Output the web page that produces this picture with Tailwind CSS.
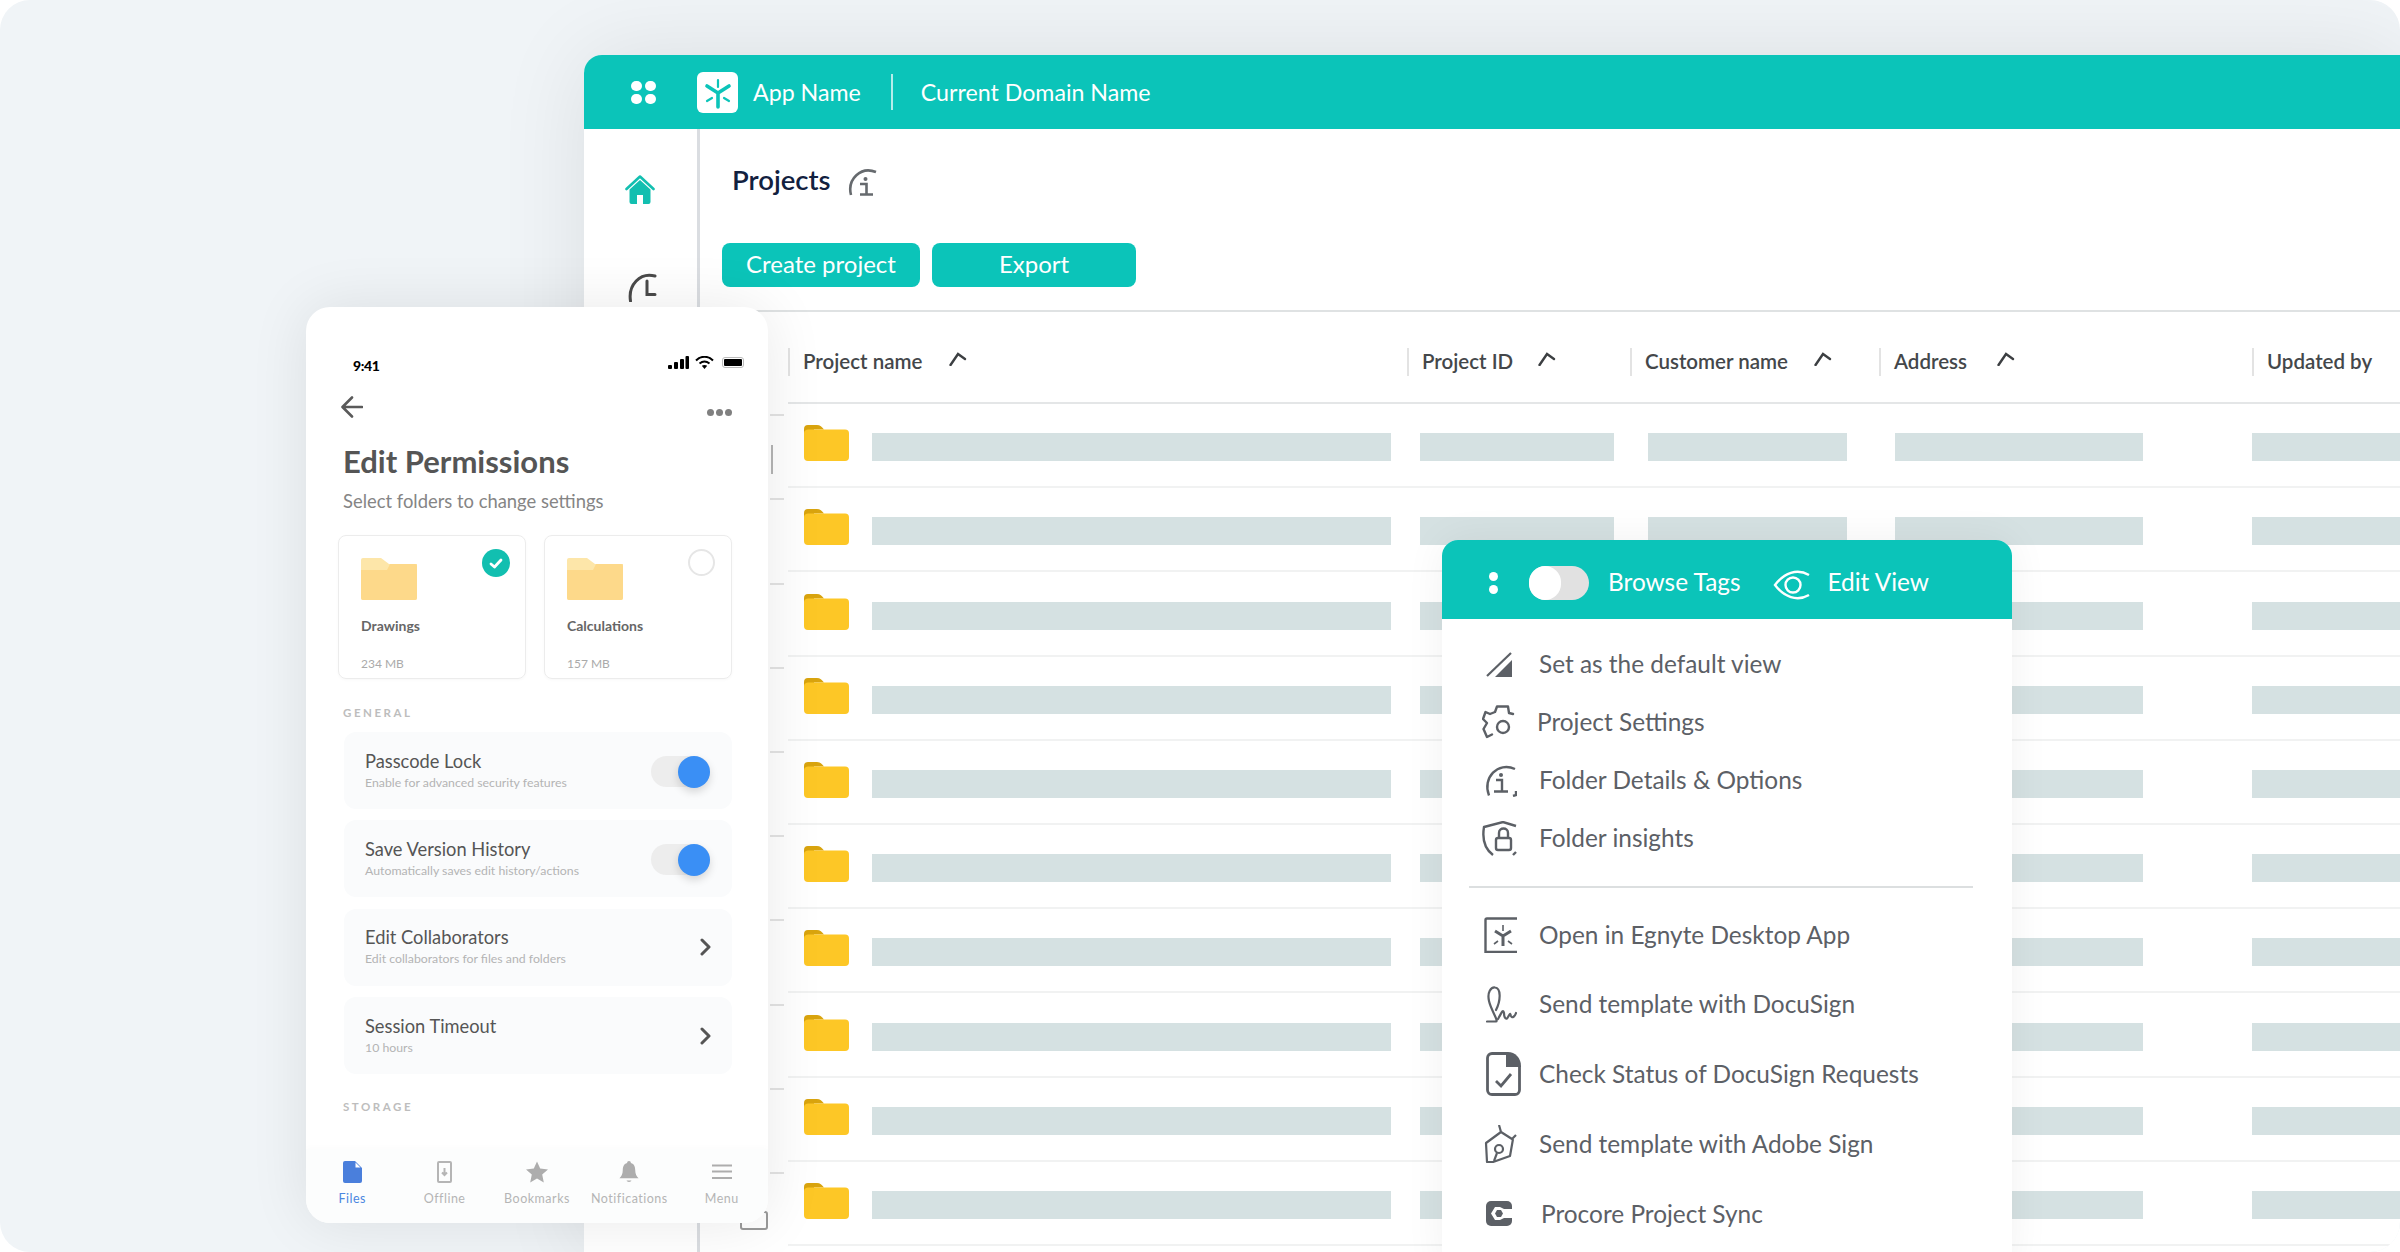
<!DOCTYPE html>
<html lang="en">
<head>
  <meta charset="UTF-8">
  <title>Projects</title>
  <script src="https://cdn.jsdelivr.net/npm/@tailwindcss/browser@4"></script>
</head>
<body class="bg-white w-[2400px] h-[1252px] overflow-hidden [font-family:Lato,sans-serif]">
<div class="relative w-full h-full overflow-hidden rounded-[30px] bg-[#f0f4f7] pt-[55px] pl-[584px]">

  <!-- desktop app window -->
  <div class="flex flex-col w-[1816px] h-[1197px] bg-white rounded-tl-[18px] shadow-[0_0_90px_rgba(0,0,0,0.09)]">
    <header class="flex items-center h-[74px] shrink-0 bg-[#0bc4b9] rounded-tl-[18px] pl-[47px] text-white text-[23.2px]">
      <div class="grid grid-cols-2 gap-[3px] w-[25px]">
        <span class="h-[10px] w-[11px] rounded-full bg-white"></span><span class="h-[10px] w-[11px] rounded-full bg-white"></span>
        <span class="h-[10px] w-[11px] rounded-full bg-white"></span><span class="h-[10px] w-[11px] rounded-full bg-white"></span>
      </div>
      <div class="ml-[41px] w-[41px] h-[41px] rounded-[6px] bg-white flex items-center justify-center">
        <svg width="41" height="41" viewBox="0 0 41 41" fill="none" stroke="#0bc4b9" stroke-linecap="round">
          <path d="M21 21V35M21 21 10 14M21 21 32 14" stroke-width="3.6"/>
          <path d="M21 8V15M10 29 15 26M32 29 27 26" stroke-width="2.2"/>
        </svg>
      </div>
      <span class="ml-[15px]">App Name</span>
      <span class="ml-[30px] w-[2px] h-[36px] bg-white/70"></span>
      <span class="ml-[28px]">Current Domain Name</span>
    </header>

    <div class="flex flex-1 min-h-0">
      <aside class="w-[116px] shrink-0 border-r-[3px] border-[#dadde1] pl-[41px] pt-[46px]">
        <svg width="30" height="29" viewBox="0 0 30 29" fill="none">
          <path d="M1.5 14 15 1.5 28.5 14" stroke="#12bfb0" stroke-width="2.6" stroke-linecap="round" stroke-linejoin="round"/>
          <path d="M4.5 14.5 15 5l10.5 9.5V27a2 2 0 0 1-2 2H18v-9h-6v9H6.500a2 2 0 0 1-2-2z" fill="#12bfb0"/>
        </svg>
        <svg class="mt-[69px] ml-[3px]" width="30" height="29" viewBox="0 0 30 29" fill="none" stroke="#4a4a4a" stroke-width="3" stroke-linecap="round">
          <path d="M2.500 28C0 12 12 -1 27 3"/>
          <path d="M19 8V21.500H27"/>
        </svg>
      </aside>

      <main class="flex-1 min-w-0">
        <div class="flex items-center h-[102px] pl-[32px]">
          <h1 class="text-[27.5px] font-semibold text-[#12213f]">Projects</h1>
          <svg class="ml-[16px] mt-[3px]" width="31" height="30" viewBox="0 0 31 30" fill="none" stroke="#666a6e" stroke-width="2.6">
            <path d="M4 28C0 12 14 -1 29 5"/>
            <circle cx="18.500" cy="12" r="2" fill="#666a6e" stroke="none"/>
            <path d="M13 17H19.500V27M13 27.500H26"/>
          </svg>
        </div>
        <div class="flex gap-[12px] pl-[22px] mt-[12px]">
          <button class="w-[198px] h-[44px] rounded-[8px] bg-[#0bc4b9] text-white text-[24px] pb-[2px]">Create project</button>
          <button class="w-[204px] h-[44px] rounded-[8px] bg-[#0bc4b9] text-white text-[24px] pb-[2px]">Export</button>
        </div>

        <div class="relative flex mt-[23px] border-t-2 border-[#dfe2e3]">
          <!-- left edge of the table, mostly behind the phone -->
          <div class="w-[88px] shrink-0 pl-[70px] pt-[20px]">
            <div class="h-[84.2px] w-[14px] border-b-2 border-[#e3e3e3]"></div>
            <div class="relative h-[84.2px] w-[14px] border-b-2 border-[#e3e3e3]">
              <span class="absolute left-[1px] top-[29px] w-[2px] h-[29px] bg-[#b5b5b5]"></span>
            </div>
            <div class="h-[84.2px] w-[14px] border-b-2 border-[#e3e3e3]"></div>
            <div class="h-[84.2px] w-[14px] border-b-2 border-[#e3e3e3]"></div>
            <div class="h-[84.2px] w-[14px] border-b-2 border-[#e3e3e3]"></div>
            <div class="h-[84.2px] w-[14px] border-b-2 border-[#e3e3e3]"></div>
            <div class="h-[84.2px] w-[14px] border-b-2 border-[#e3e3e3]"></div>
            <div class="h-[84.2px] w-[14px] border-b-2 border-[#e3e3e3]"></div>
            <div class="h-[84.2px] w-[14px] border-b-2 border-[#e3e3e3]"></div>
            <div class="h-[84.2px] w-[14px] border-b-2 border-[#e3e3e3]"></div>
            <span class="absolute left-[40px] top-[899px] w-[28px] h-[19px] border-2 border-[#9a9a9a] rounded-[3px]"></span>
          </div>

          <div class="flex-1 min-w-0">
            <div class="flex items-center h-[92px] pt-[9px] border-b-2 border-[#e4e6e7] text-[20.5px] font-semibold text-[#44474a]">
              <div class="flex items-center w-[619px] h-[28px] border-l-2 border-[#e3e3e3] pl-[13px]">Project name
                <svg class="ml-[27px] -mt-[6px]" width="18" height="14" viewBox="0 0 18 14" fill="none" stroke="#3c3f42" stroke-width="2.400" stroke-linecap="round"><path d="M1.500 13 9 2 16 7"/></svg>
              </div>
              <div class="flex items-center w-[223px] h-[28px] border-l-2 border-[#e3e3e3] pl-[13px]">Project ID
                <svg class="ml-[25px] -mt-[6px]" width="18" height="14" viewBox="0 0 18 14" fill="none" stroke="#3c3f42" stroke-width="2.400" stroke-linecap="round"><path d="M1.500 13 9 2 16 7"/></svg>
              </div>
              <div class="flex items-center w-[249px] h-[28px] border-l-2 border-[#e3e3e3] pl-[13px]">Customer name
                <svg class="ml-[26px] -mt-[6px]" width="18" height="14" viewBox="0 0 18 14" fill="none" stroke="#3c3f42" stroke-width="2.400" stroke-linecap="round"><path d="M1.500 13 9 2 16 7"/></svg>
              </div>
              <div class="flex items-center w-[373px] h-[28px] border-l-2 border-[#e3e3e3] pl-[13px]">Address
                <svg class="ml-[30px] -mt-[6px]" width="18" height="14" viewBox="0 0 18 14" fill="none" stroke="#3c3f42" stroke-width="2.400" stroke-linecap="round"><path d="M1.500 13 9 2 16 7"/></svg>
              </div>
              <div class="flex items-center h-[28px] border-l-2 border-[#e3e3e3] pl-[13px]">Updated by</div>
            </div>
            <div id="rows"></div>
          </div>
        </div>
      </main>
    </div>
  </div>

  <!-- phone card -->
  <section class="absolute left-[306px] top-[307px] flex flex-col w-[462px] h-[916px] overflow-hidden rounded-[24px] bg-white shadow-[0_0_60px_rgba(0,0,0,0.09)]">
    <div class="flex items-center justify-between h-[20px] mt-[48px] pl-[47px] pr-[24px]">
      <span class="text-[14px] font-black text-black tracking-tight">9:41</span>
      <div class="flex items-center gap-[6px] -mt-[5px]">
        <svg width="21" height="13" viewBox="0 0 21 13" fill="#000"><rect x="0" y="9" width="4" height="4" rx="1"/><rect x="6" y="6" width="4" height="7" rx="1"/><rect x="12" y="3" width="4" height="10" rx="1"/><rect x="17.500" y="0" width="3.500" height="13" rx="1"/></svg>
        <svg width="19" height="13" viewBox="0 0 19 13" fill="none" stroke="#000" stroke-width="2"><path d="M1 4.500C6 -.5 13 -.5 18 4.500"/><path d="M4.500 7.500C7.500 5 11.500 5 14.500 7.500"/><path d="M6.800 9.800 9.500 13l2.700-3.200C10.500 8.600 8.500 8.600 6.800 9.800Z" fill="#000" stroke="none"/></svg>
        <span class="ml-[2px] flex items-center justify-center w-[22px] h-[11px] rounded-[3px] border border-[#bbb]"><span class="w-[18px] h-[7px] rounded-[1px] bg-black"></span></span>
      </div>
    </div>

    <div class="flex items-end justify-between h-[22px] mt-[21px] pl-[35px] pr-[36px]">
      <svg width="22" height="22" viewBox="0 0 22 22" fill="none" stroke="#5a5a5a" stroke-width="2.600" stroke-linecap="round" stroke-linejoin="round"><path d="M21 11H2M11 1.500 1.500 11 11 20.500"/></svg>
      <div class="flex gap-[2px] mb-[2px]"><span class="w-[7px] h-[7px] rounded-full bg-[#808080]"></span><span class="w-[7px] h-[7px] rounded-full bg-[#808080]"></span><span class="w-[7px] h-[7px] rounded-full bg-[#808080]"></span></div>
    </div>

    <h2 class="h-[40px] mt-[23px] ml-[37px] text-[31px] leading-[40px] font-bold text-[#555]">Edit Permissions</h2>
    <p class="h-[24px] mt-[8px] ml-[37px] text-[18.4px] leading-[24px] text-[#858585]">Select folders to change settings</p>

    <div class="flex gap-[18px] mt-[22px] ml-[32px]">
      <div class="relative w-[188px] h-[144px] rounded-[8px] border border-[#ececec] pl-[22px] pt-[22px] shadow-[0_1px_3px_rgba(0,0,0,0.03)]">
        <svg width="56" height="42" viewBox="0 0 56 42"><path d="M2 0H20L28 6H56V40a2 2 0 0 1-2 2H2a2 2 0 0 1-2-2V2a2 2 0 0 1 2-2Z" fill="#fde6a9"/><path d="M0 12H26L29 6H54a2 2 0 0 1 2 2V40a2 2 0 0 1-2 2H2a2 2 0 0 1-2-2Z" fill="#fdd98a"/></svg>
        <p class="mt-[17px] text-[14px] font-bold text-[#666] leading-[18px]">Drawings</p>
        <p class="mt-[21px] text-[12px] text-[#aaa] leading-[16px]">234 MB</p>
        <span class="absolute right-[15px] top-[13px] flex items-center justify-center w-[28px] h-[28px] rounded-full bg-[#12bfb0]">
          <svg width="14" height="11" viewBox="0 0 14 11" fill="none" stroke="#fff" stroke-width="2.800" stroke-linecap="round" stroke-linejoin="round"><path d="M2 6 5.500 9 12 2"/></svg>
        </span>
      </div>
      <div class="relative w-[188px] h-[144px] rounded-[8px] border border-[#ececec] pl-[22px] pt-[22px] shadow-[0_1px_3px_rgba(0,0,0,0.03)]">
        <svg width="56" height="42" viewBox="0 0 56 42"><path d="M2 0H20L28 6H56V40a2 2 0 0 1-2 2H2a2 2 0 0 1-2-2V2a2 2 0 0 1 2-2Z" fill="#fde6a9"/><path d="M0 12H26L29 6H54a2 2 0 0 1 2 2V40a2 2 0 0 1-2 2H2a2 2 0 0 1-2-2Z" fill="#fdd98a"/></svg>
        <p class="mt-[17px] text-[14px] font-bold text-[#666] leading-[18px]">Calculations</p>
        <p class="mt-[21px] text-[12px] text-[#aaa] leading-[16px]">157 MB</p>
        <span class="absolute right-[16px] top-[13px] w-[27px] h-[27px] rounded-full border-2 border-[#e6e6e6]"></span>
      </div>
    </div>

    <p class="h-[16px] mt-[26px] ml-[37px] text-[11.500px] leading-[16px] font-bold tracking-[0.22em] text-[#bdbdbd]">GENERAL</p>

    <div class="flex flex-col gap-[11.400px] mt-[11px] ml-[38px] w-[388px]">
      <div class="flex items-center justify-between h-[77px] rounded-[12px] bg-[#fafbfc] pl-[21px] pr-[22px]">
        <div><p class="text-[18.3px] leading-[23px] text-[#555]">Passcode Lock</p><p class="mt-[1px] text-[12.3px] leading-[18px] text-[#b4b4b4]">Enable for advanced security features</p></div>
        <span class="relative block w-[59px] h-[31px] mt-[2px] rounded-full bg-[#ededed]"><span class="absolute right-0 -top-[0.5px] w-[32px] h-[32px] rounded-full bg-[#3a8ff5] shadow-[0_4px_8px_rgba(0,0,0,0.15)]"></span></span>
      </div>
      <div class="flex items-center justify-between h-[77px] rounded-[12px] bg-[#fafbfc] pl-[21px] pr-[22px]">
        <div><p class="text-[18.3px] leading-[23px] text-[#555]">Save Version History</p><p class="mt-[1px] text-[12.3px] leading-[18px] text-[#b4b4b4]">Automatically saves edit history/actions</p></div>
        <span class="relative block w-[59px] h-[31px] mt-[2px] rounded-full bg-[#ededed]"><span class="absolute right-0 -top-[0.5px] w-[32px] h-[32px] rounded-full bg-[#3a8ff5] shadow-[0_4px_8px_rgba(0,0,0,0.15)]"></span></span>
      </div>
      <div class="flex items-center justify-between h-[77px] rounded-[12px] bg-[#fafbfc] pl-[21px] pr-[21px]">
        <div><p class="text-[18.3px] leading-[23px] text-[#555]">Edit Collaborators</p><p class="mt-[1px] text-[12.3px] leading-[18px] text-[#b4b4b4]">Edit collaborators for files and folders</p></div>
        <svg width="11" height="18" viewBox="0 0 11 18" fill="none" stroke="#555" stroke-width="3" stroke-linecap="round" stroke-linejoin="round"><path d="M2 2 9 9 2 16"/></svg>
      </div>
      <div class="flex items-center justify-between h-[77px] rounded-[12px] bg-[#fafbfc] pl-[21px] pr-[21px]">
        <div><p class="text-[18.3px] leading-[23px] text-[#555]">Session Timeout</p><p class="mt-[1px] text-[12.3px] leading-[18px] text-[#b4b4b4]">10 hours</p></div>
        <svg width="11" height="18" viewBox="0 0 11 18" fill="none" stroke="#555" stroke-width="3" stroke-linecap="round" stroke-linejoin="round"><path d="M2 2 9 9 2 16"/></svg>
      </div>
    </div>

    <p class="h-[16px] mt-[25px] ml-[37px] text-[11.500px] leading-[16px] font-bold tracking-[0.22em] text-[#bdbdbd]">STORAGE</p>

    <nav class="grid grid-cols-5 mt-auto h-[74px] bg-[#fcfdfd] pt-[12px] text-[12.5px] tracking-[0.04em] text-[#b5b5b5] shadow-[0_-2px_6px_rgba(0,0,0,0.015)]">
      <div class="flex flex-col items-center text-[#4a86e0]">
        <svg class="h-[22px]" width="19" height="22" viewBox="0 0 19 22"><path d="M2 0H12L19 7V20a2 2 0 0 1-2 2H2a2 2 0 0 1-2-2V2a2 2 0 0 1 2-2Z" fill="#4a7fdc"/><path d="M12.500 1.500 17.500 6.500H12.500Z" fill="#fff"/></svg>
        <span class="mt-[7px]">Files</span>
      </div>
      <div class="flex flex-col items-center">
        <svg class="h-[22px]" width="15" height="22" viewBox="0 0 15 22" fill="none" stroke="#b5b5b5" stroke-width="2"><rect x="1" y="1" width="13" height="20" rx="1"/><path d="M7.500 7V14M5 11.500 7.500 14 10 11.500"/></svg>
        <span class="mt-[7px]">Offline</span>
      </div>
      <div class="flex flex-col items-center">
        <svg class="h-[22px]" width="22" height="21" viewBox="0 0 22 21" fill="#adadad"><path d="M11 0 14.200 7 22 7.900 16.200 13.100 17.800 21 11 17 4.200 21 5.800 13.100 0 7.900 7.800 7Z"/></svg>
        <span class="mt-[7px]">Bookmarks</span>
      </div>
      <div class="flex flex-col items-center">
        <svg class="h-[22px]" width="20" height="23" viewBox="0 0 20 23" fill="#adadad"><path d="M10 0C11.200 0 12 .8 12 2 15.500 3 16.500 6 16.500 9.500 16.500 14 18 16 20 18H0C2 16 3.500 14 3.500 9.500 3.500 6 4.500 3 8 2 8 .8 8.800 0 10 0Z"/><path d="M7.500 20.500H12.500C12 22.500 8 22.500 7.500 20.500Z"/></svg>
        <span class="mt-[7px]">Notifications</span>
      </div>
      <div class="flex flex-col items-center">
        <svg class="h-[22px]" width="20" height="15" viewBox="0 0 20 15" fill="#adadad"><rect y="0" width="20" height="2"/><rect y="6" width="20" height="2"/><rect y="12.500" width="20" height="2"/></svg>
        <span class="mt-[7px]">Menu</span>
      </div>
    </nav>
  </section>

  <!-- context menu -->
  <section class="absolute left-[1442px] top-[540px] w-[570px] h-[730px] rounded-t-[16px] bg-white shadow-[0_0_40px_rgba(0,0,0,0.06)] text-[24.4px] text-[#5c6066]">
    <div class="flex items-center h-[79px] pt-[6px] rounded-t-[16px] bg-[#0bc4b9] pl-[47px] text-white">
      <div class="flex flex-col gap-[4px]"><span class="w-[9px] h-[9px] rounded-full bg-white"></span><span class="w-[9px] h-[9px] rounded-full bg-white"></span></div>
      <span class="relative block ml-[31px] w-[60px] h-[34px] rounded-full bg-[#e1e1e1]"><span class="absolute left-0 top-0 w-[32px] h-[34px] rounded-full bg-white"></span></span>
      <span class="ml-[19px]">Browse Tags</span>
      <svg class="ml-[32px] mt-[5px]" width="38" height="30" viewBox="0 0 38 30" fill="none" stroke="#fff" stroke-width="2.400"><path d="M36 5C24 -2 11 3 2 15 11 27 24 32 36 25"/><circle cx="20" cy="15" r="7.500"/></svg>
      <span class="ml-[17px]">Edit View</span>
    </div>
    <div class="pt-[16px]">
      <div class="flex items-center h-[58px] pl-[40px]">
        <span class="flex items-center w-[57px] pl-[4px]"><svg width="27" height="25" viewBox="0 0 27 25" fill="none"><path d="M1 24 25 1" stroke="#5c6066" stroke-width="2.200"/><path d="M9 25H26V8Z" fill="#5c6066"/></svg></span>Set as the default view
      </div>
      <div class="flex items-center h-[58px] pl-[40px]">
        <span class="flex items-center w-[55px]"><svg width="33" height="34" viewBox="0 0 33 34" fill="none" stroke="#5c6066" stroke-width="2.400" stroke-linecap="round" stroke-linejoin="round"><path d="M31 9 27 8 26 1.500H15L13 7 8 9 3.500 7 1 14 5 18 1.500 24 5 32 10 29.500"/><circle cx="21" cy="22" r="6"/></svg></span>Project Settings
      </div>
      <div class="flex items-center h-[58px] pl-[40px]">
        <span class="flex items-center w-[57px] pl-[2px]"><svg width="33" height="33" viewBox="0 0 33 33" fill="none" stroke="#5c6066" stroke-width="2.400"><path d="M5 31.500C-2 14 14 -3 31 5"/><circle cx="17" cy="11" r="2" fill="#5c6066" stroke="none"/><path d="M12 16H18V27M10 27.500H24M29 32 32 31V27"/></svg></span>Folder Details &amp; Options
      </div>
      <div class="flex items-center h-[58px] pl-[40px]">
        <span class="flex items-center w-[57px]"><svg width="35" height="35" viewBox="0 0 35 35" fill="none" stroke="#5c6066" stroke-width="2.400" stroke-linejoin="round"><path d="M34 5 21 1 2 6C0 18 3 28 11 34"/><rect x="14" y="17" width="15" height="12" rx="2"/><path d="M17 17V12C17 6 26 6 26 12V17"/><path d="M31 34 34 31"/></svg></span>Folder insights
      </div>
      <div class="h-[2px] bg-[#dcdfe0] mt-[19px] ml-[27px] mr-[39px]"></div>
      <div class="flex items-center h-[69.750px] pl-[42px] mt-[12px]">
        <span class="flex items-center w-[55px]"><svg width="33" height="36" viewBox="0 0 33 36" fill="none" stroke="#5c6066"><path d="M33 1.500H3C2 1.500 1.500 2 1.500 3V35H33" stroke-width="2.400"/><path d="M19 19V29M19 19 11 14M19 19 27 14" stroke-width="3"/><path d="M19 8V14M10 27 14 24M28 27 24 24" stroke-width="1.600"/></svg></span>Open in Egnyte Desktop App
      </div>
      <div class="flex items-center h-[69.750px] pl-[42px]">
        <span class="flex items-center w-[55px] pl-[2px]"><svg width="31" height="37" viewBox="0 0 31 37" fill="none" stroke="#5c6066" stroke-width="2.200" stroke-linecap="round" stroke-linejoin="round"><path d="M1 35.500H10C13 35.500 5 24 3 15 1 6 5 1 9 1.500 15 2 15 14 10 24"/><path d="M12 33C15 28 17 22 18 27 18 33 21 34 22 31 24 28 24 26 25 30 26 33 29 30 30 27"/></svg></span>Send template with DocuSign
      </div>
      <div class="flex items-center h-[69.750px] pl-[42px]">
        <span class="flex items-center w-[55px] pl-[2px]"><svg width="35" height="44" viewBox="0 0 35 44" fill="none"><path d="M20 1.500H6A4.500 4.500 0 0 0 1.500 6V38A4.500 4.500 0 0 0 6 42.500H29A4.500 4.500 0 0 0 33.500 38V14" stroke="#5c6066" stroke-width="2.800"/><path d="M20 0H22C29 0 35 6 35 14V15H20Z" fill="#5c6066"/><path d="M10 29 15 34 25 22" stroke="#5c6066" stroke-width="2.800"/></svg></span>Check Status of DocuSign Requests
      </div>
      <div class="flex items-center h-[69.750px] pl-[42px]">
        <span class="flex items-center w-[55px]"><svg width="33" height="38" viewBox="0 0 33 38" fill="none" stroke="#5c6066" stroke-width="2.200" stroke-linejoin="round"><path d="M15 0 17 7 28 14 32 10M17 7 2 18 3 37 9 37 26 31 29 14"/><circle cx="15" cy="24" r="4"/><path d="M13 28 10 36"/></svg></span>Send template with Adobe Sign
      </div>
      <div class="flex items-center h-[69.750px] pl-[44px]">
        <span class="flex items-center w-[55px]"><svg width="26" height="25" viewBox="0 0 26 25"><rect width="26" height="25" rx="5" fill="#5c6066"/><path d="M26 8H18L14 6H9L5 12.500 9 19H14L18 17H26Z" fill="#fff"/><path d="M11 9H15L17 12.500 15 16H11L9 12.500Z" fill="#5c6066"/></svg></span>Procore Project Sync
      </div>
    </div>
  </section>
</div>

<script>
  // ten skeleton rows of the project table
  const folder = `<svg class="shrink-0" width="45" height="36" viewBox="0 0 45 36"><path d="M4 0H13C16 0 18 2 20 4.500H10V10H0V4A4 4 0 0 1 4 0Z" fill="#d9a40e"/><path d="M0 8C0 6 2 4.500 4 4.500H41A4 4 0 0 1 45 8.500V32A4 4 0 0 1 41 36H4A4 4 0 0 1 0 32Z" fill="#fdc726"/></svg>`;
  let html = '';
  for (let i = 0; i < 10; i++) {
    html += `<div class="flex items-end h-[84.2px] border-b-2 border-[#f1f2f2] pl-[16px] pb-[25px]">
      ${folder}
      <span class="ml-[23px] w-[519px] h-[28px] bg-[#d5e1e2]"></span>
      <span class="ml-[29px] w-[194px] h-[28px] bg-[#d5e1e2]"></span>
      <span class="ml-[34px] w-[199px] h-[28px] bg-[#d5e1e2]"></span>
      <span class="ml-[48px] w-[248px] h-[28px] bg-[#d5e1e2]"></span>
      <span class="ml-[109px] w-[148px] h-[28px] bg-[#d5e1e2]"></span>
    </div>`;
  }
  document.getElementById('rows').innerHTML = html;
</script>
</body>
</html>
